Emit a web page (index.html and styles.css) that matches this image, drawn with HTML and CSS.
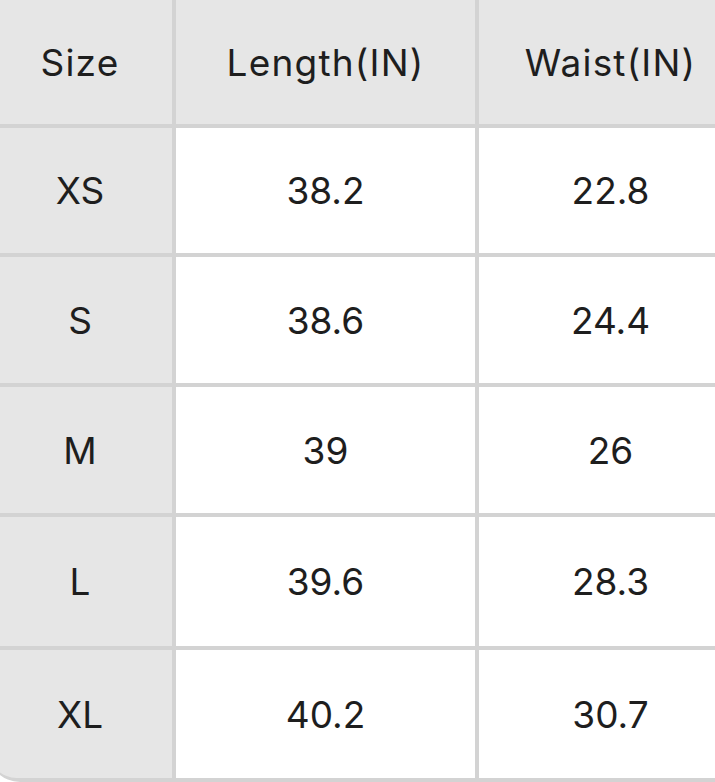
FILE: index.html
```html
<!DOCTYPE html>
<html>
<head>
<meta charset="utf-8">
<link rel="stylesheet" href="styles.css">
</head>
<body>
<div class="table">
  <div class="cell head">Size</div><div class="cell head">Length(IN)</div><div class="cell head">Waist(IN)</div>
  <div class="cell side">XS</div><div class="cell">38.2</div><div class="cell">22.8</div>
  <div class="cell side">S</div><div class="cell">38.6</div><div class="cell">24.4</div>
  <div class="cell side">M</div><div class="cell">39</div><div class="cell">26</div>
  <div class="cell side">L</div><div class="cell">39.6</div><div class="cell">28.3</div>
  <div class="cell side corner">XL</div><div class="cell">40.2</div><div class="cell">30.7</div>
</div>
</body>
</html>
```
FILE: styles.css
```css
html, body {
  margin: 0;
  padding: 0;
  background: #ffffff;
  overflow: hidden;
}
.table {
  width: 754px;
  height: 782px;
  margin-left: -12px;
  display: grid;
  grid-template-columns: 184px 299px 263px;
  grid-template-rows: 124px 125px 126px 126px 129px 128px;
  column-gap: 4px;
  row-gap: 4px;
  padding-bottom: 4px;
  box-sizing: border-box;
  background: #d3d3d3;
  border-bottom-left-radius: 32px;
  overflow: hidden;
}
.cell {
  background: #ffffff;
  display: flex;
  align-items: center;
  justify-content: center;
  font-family: Inter, "Noto Sans", sans-serif;
  font-size: 37px;
  font-weight: 400;
  color: #1e1e1e;
}
.head, .side {
  background: #e6e6e6;
}
.head {
  letter-spacing: 1.2px;
}
.corner {
  border-bottom-left-radius: 29px;
}
```
